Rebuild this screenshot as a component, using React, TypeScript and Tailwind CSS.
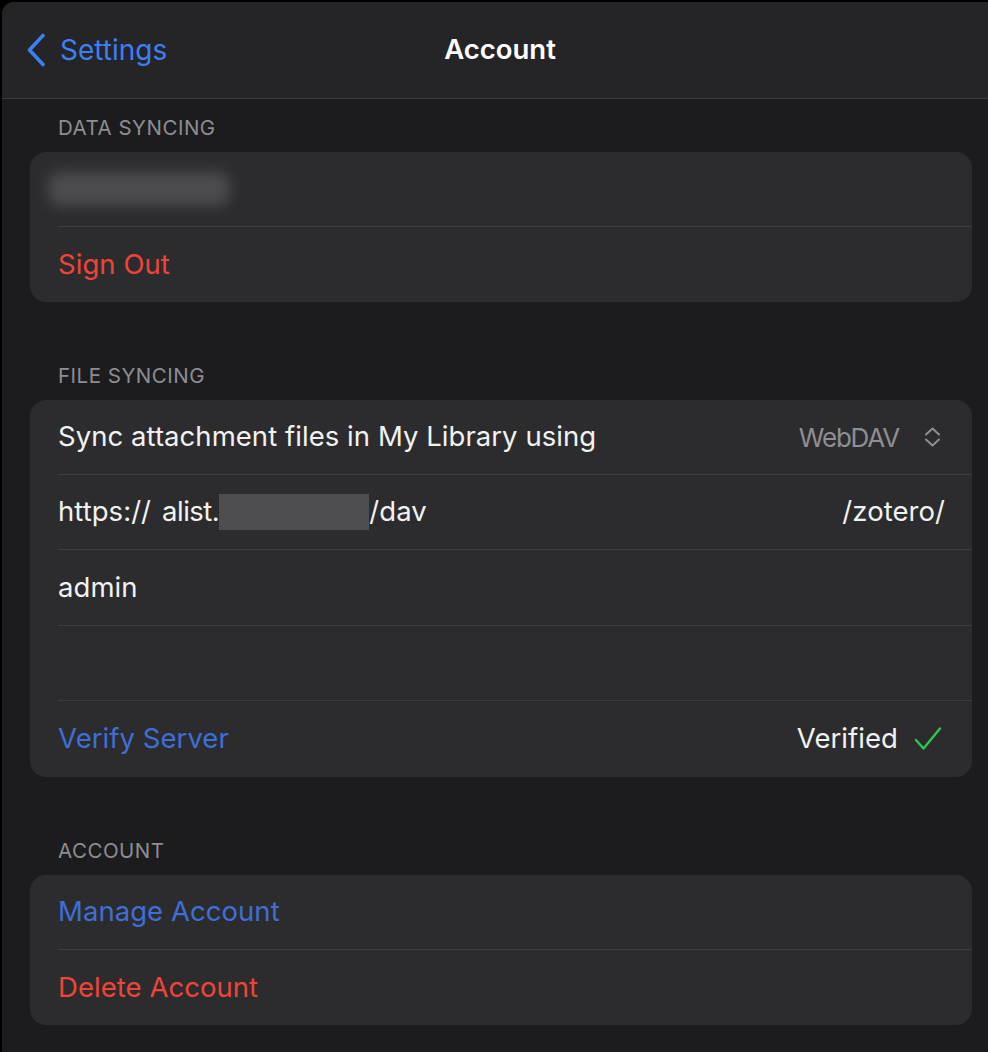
import React from "react";

const font = { fontFamily: "Inter, 'Noto Sans', 'Liberation Sans', sans-serif" };

function Row({ children, last, h = 75 }: { children: React.ReactNode; last?: boolean; h?: number }) {
  return (
    <div className="pl-[28px]">
      <div
        className={
          "flex items-center justify-between pr-[27px] " +
          (h === 76 ? "h-[76px] " : "h-[75px] ") +
          (last ? "" : "border-b border-[#3d3d40]")
        }
      >
        {children}
      </div>
    </div>
  );
}

function Label({ children }: { children: React.ReactNode }) {
  return (
    <div className="pl-[56px] text-[20.5px] leading-[24px] tracking-[0.5px] text-[#8d8d93]">{children}</div>
  );
}

function Card({ children }: { children: React.ReactNode }) {
  return <div className="ml-[28px] mr-[16px] overflow-hidden rounded-[16px] bg-[#2c2c2e]">{children}</div>;
}

const T = "text-[27.5px] tracking-[0.05px]";

export default function App() {
  return (
    <div className="h-[1052px] w-full overflow-hidden bg-black pl-[2px] pt-[2px]" style={font}>
      <div className="h-full overflow-hidden rounded-tl-[12px] bg-[#1c1c1e]">
        <div className="grid h-[97px] grid-cols-[1fr_auto_1fr] items-center border-b border-[#3a3a3c] bg-[#252527] pl-[24px] pr-[14px]">
          <div className="flex items-center gap-[14px] text-[#3d7ff5]">
            <svg width="20" height="34" viewBox="0 0 20 34" fill="none">
              <path d="M17 2.5 L3.5 17 L17 31.5" stroke="#3d7ff5" strokeWidth="3.6" strokeLinecap="round" strokeLinejoin="round" />
            </svg>
            <span className="text-[28px] leading-none">Settings</span>
          </div>
          <div className="text-[27.5px] font-semibold leading-none text-white">Account</div>
          <div />
        </div>

        <div className="pt-[17px]">
          <Label>DATA SYNCING</Label>
          <div className="h-[12px]" />
          <Card>
            <Row>
              <div className="-ml-[10px] h-[34px] w-[182px] rounded-[12px] bg-[#4c4c4e] blur-[7px]" />
            </Row>
            <Row last>
              <span className={T + " text-[#f0443a]"}>Sign Out</span>
            </Row>
          </Card>

          <div className="h-[62px]" />
          <Label>FILE SYNCING</Label>
          <div className="h-[12px]" />
          <Card>
            <Row>
              <span className={T + " text-[#f2f2f2]"}>Sync attachment files in My Library using</span>
              <span className="flex items-center gap-[25px] pr-[4px] text-[26px] tracking-[-1.2px] text-[#8e8e93]">
                WebDAV
                <svg width="17" height="22" viewBox="0 0 17 22" fill="none">
                  <path d="M2 8.5 L8.5 2.5 L15 8.5" stroke="#8e8e93" strokeWidth="2" strokeLinecap="round" strokeLinejoin="round" />
                  <path d="M2 13.5 L8.5 19.5 L15 13.5" stroke="#8e8e93" strokeWidth="2" strokeLinecap="round" strokeLinejoin="round" />
                </svg>
              </span>
            </Row>
            <Row>
              <span className={T + " flex items-center text-[#f2f2f2]"}>
                <span>https://</span>
                <span className="ml-[11px] tracking-[-0.5px]">alist.</span>
                <span className="inline-block h-[36px] w-[150px] bg-[#4e4e50]" />
                <span>/dav</span>
              </span>
              <span className={T + " text-[#f2f2f2]"}>/zotero/</span>
            </Row>
            <Row h={76}>
              <span className={T + " text-[#f2f2f2]"}>admin</span>
            </Row>
            <Row>
              <span />
            </Row>
            <Row last h={76}>
              <span className={T + " text-[#3f6fd6]"}>Verify Server</span>
              <span className={T + " flex items-center gap-[16px] pr-[3px] text-[#f2f2f2]"}>
                Verified
                <svg width="28" height="26" viewBox="0 0 28 26" fill="none">
                  <path d="M2 14 L9.5 22.5 L26 2.5" stroke="#30c552" strokeWidth="2.4" strokeLinecap="round" strokeLinejoin="round" />
                </svg>
              </span>
            </Row>
          </Card>

          <div className="h-[62px]" />
          <Label>ACCOUNT</Label>
          <div className="h-[12px]" />
          <Card>
            <Row>
              <span className={T + " text-[#3f6fd6]"}>Manage Account</span>
            </Row>
            <Row last>
              <span className={T + " text-[#f0443a]"}>Delete Account</span>
            </Row>
          </Card>
        </div>
      </div>
    </div>
  );
}
